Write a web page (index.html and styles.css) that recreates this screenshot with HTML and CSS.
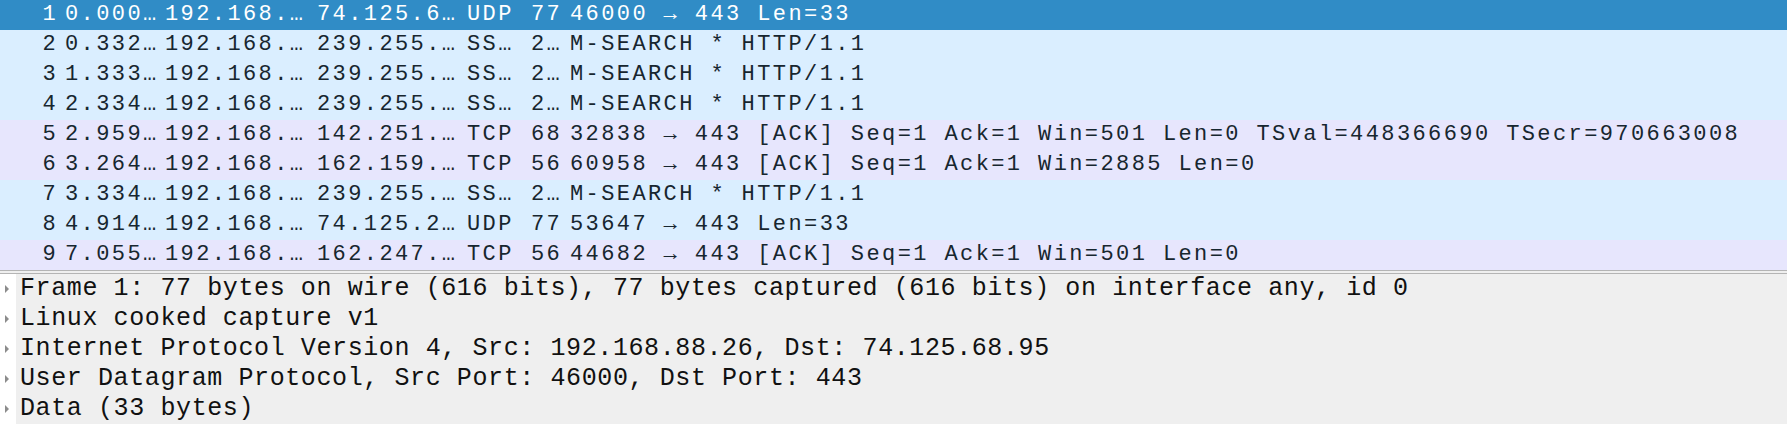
FILE: index.html
```html
<!DOCTYPE html>
<html>
<head>
<meta charset="utf-8">
<link rel="stylesheet" href="styles.css">
</head>
<body>
<div class="app">
  <div class="packet-list">
    <div class="row selected"><span class="c-no">1</span><span class="c-time">0.000…</span><span class="c-src">192.168.…</span><span class="c-dst">74.125.6…</span><span class="c-proto">UDP</span><span class="c-len">77</span><span class="c-info">46000 → 443 Len=33</span></div>
    <div class="row udp"><span class="c-no">2</span><span class="c-time">0.332…</span><span class="c-src">192.168.…</span><span class="c-dst">239.255.…</span><span class="c-proto">SS…</span><span class="c-len">2…</span><span class="c-info">M-SEARCH * HTTP/1.1</span></div>
    <div class="row udp"><span class="c-no">3</span><span class="c-time">1.333…</span><span class="c-src">192.168.…</span><span class="c-dst">239.255.…</span><span class="c-proto">SS…</span><span class="c-len">2…</span><span class="c-info">M-SEARCH * HTTP/1.1</span></div>
    <div class="row udp"><span class="c-no">4</span><span class="c-time">2.334…</span><span class="c-src">192.168.…</span><span class="c-dst">239.255.…</span><span class="c-proto">SS…</span><span class="c-len">2…</span><span class="c-info">M-SEARCH * HTTP/1.1</span></div>
    <div class="row tcp"><span class="c-no">5</span><span class="c-time">2.959…</span><span class="c-src">192.168.…</span><span class="c-dst">142.251.…</span><span class="c-proto">TCP</span><span class="c-len">68</span><span class="c-info">32838 → 443 [ACK] Seq=1 Ack=1 Win=501 Len=0 TSval=448366690 TSecr=970663008</span></div>
    <div class="row tcp"><span class="c-no">6</span><span class="c-time">3.264…</span><span class="c-src">192.168.…</span><span class="c-dst">162.159.…</span><span class="c-proto">TCP</span><span class="c-len">56</span><span class="c-info">60958 → 443 [ACK] Seq=1 Ack=1 Win=2885 Len=0</span></div>
    <div class="row udp"><span class="c-no">7</span><span class="c-time">3.334…</span><span class="c-src">192.168.…</span><span class="c-dst">239.255.…</span><span class="c-proto">SS…</span><span class="c-len">2…</span><span class="c-info">M-SEARCH * HTTP/1.1</span></div>
    <div class="row udp"><span class="c-no">8</span><span class="c-time">4.914…</span><span class="c-src">192.168.…</span><span class="c-dst">74.125.2…</span><span class="c-proto">UDP</span><span class="c-len">77</span><span class="c-info">53647 → 443 Len=33</span></div>
    <div class="row tcp"><span class="c-no">9</span><span class="c-time">7.055…</span><span class="c-src">192.168.…</span><span class="c-dst">162.247.…</span><span class="c-proto">TCP</span><span class="c-len">56</span><span class="c-info">44682 → 443 [ACK] Seq=1 Ack=1 Win=501 Len=0</span></div>
  </div>
  <div class="splitter"></div>
  <div class="details">
    <div class="drow"><span class="arrow"></span><span class="dtext">Frame 1: 77 bytes on wire (616 bits), 77 bytes captured (616 bits) on interface any, id 0</span></div>
    <div class="drow"><span class="arrow"></span><span class="dtext">Linux cooked capture v1</span></div>
    <div class="drow"><span class="arrow"></span><span class="dtext">Internet Protocol Version 4, Src: 192.168.88.26, Dst: 74.125.68.95</span></div>
    <div class="drow"><span class="arrow"></span><span class="dtext">User Datagram Protocol, Src Port: 46000, Dst Port: 443</span></div>
    <div class="drow"><span class="arrow"></span><span class="dtext">Data (33 bytes)</span></div>
  </div>
</div>
</body>
</html>
```

FILE: styles.css
```css
html, body {
  margin: 0;
  padding: 0;
  background: #ffffff;
}
.app {
  display: flex;
  flex-direction: column;
  width: 1787px;
  font-family: "Liberation Mono", monospace;
}
.packet-list {
  display: flex;
  flex-direction: column;
  font-size: 22px;
  letter-spacing: 2.4px;
}
.row {
  display: flex;
  height: 30px;
  line-height: 30px;
  white-space: pre;
  color: #17262f;
}
.row.selected {
  background: #308cc6;
  color: #ffffff;
}
.row.udp {
  background: #daeeff;
}
.row.tcp {
  background: #e7e6fd;
}
.row span {
  display: block;
  box-sizing: border-box;
  flex: none;
}
.c-no {
  width: 61px;
  text-align: right;
  padding-right: 3px;
}
.c-time {
  width: 100px;
  padding-left: 4px;
}
.c-src {
  width: 152px;
  padding-left: 4px;
}
.c-dst {
  width: 150px;
  padding-left: 4px;
}
.c-proto {
  width: 65px;
  padding-left: 4px;
}
.c-len {
  width: 38px;
  padding-left: 3px;
}
.row .c-info {
  flex: 1;
  padding-left: 4px;
}
.splitter {
  height: 4px;
  box-sizing: border-box;
  border-top: 1px solid #b4b4b4;
  border-bottom: 1px solid #b4b4b4;
  background: #efefef;
}
.details {
  display: flex;
  flex-direction: column;
  font-size: 25px;
  letter-spacing: 0.6px;
}
.drow {
  display: flex;
  align-items: center;
  height: 30px;
}
.arrow {
  width: 16px;
  height: 30px;
  flex: none;
  display: flex;
  align-items: center;
  justify-content: flex-start;
  background: #ffffff;
}
.arrow::before {
  content: "";
  display: block;
  margin-left: 5px;
  border-top: 4px solid transparent;
  border-bottom: 4px solid transparent;
  border-left: 4px solid #8c8c8c;
}
.dtext {
  flex: 1;
  height: 30px;
  line-height: 30px;
  padding-left: 4px;
  background: #efefef;
  color: #111111;
  white-space: pre;
}
```
